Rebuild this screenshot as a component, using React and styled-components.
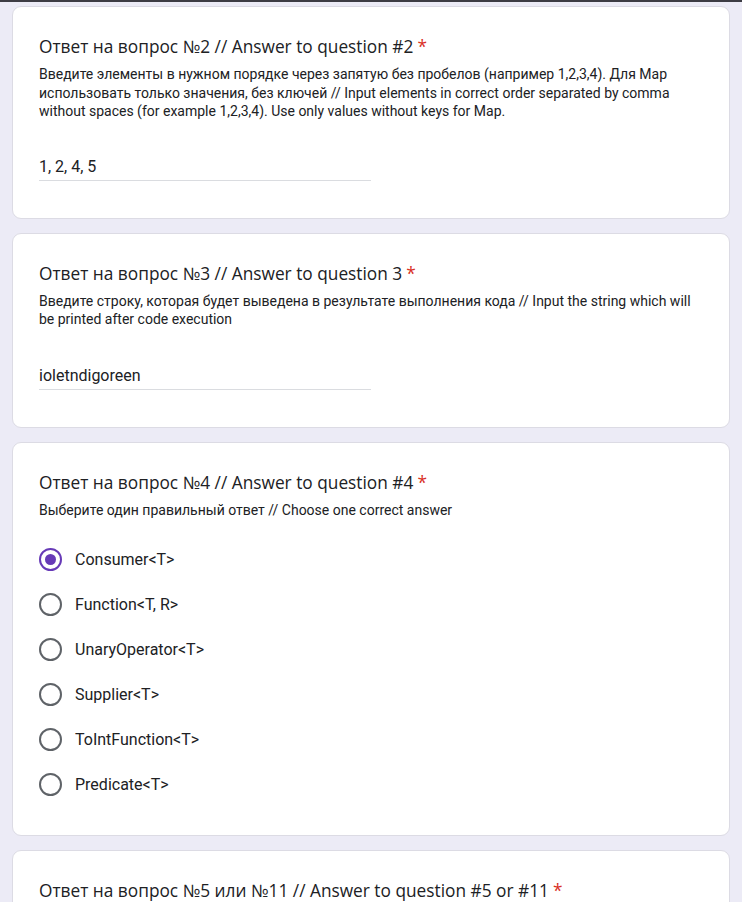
import styled, { createGlobalStyle } from "styled-components"

const GlobalStyle = createGlobalStyle`
  body {
    margin: 0;
    background: #ecebf6;
    font-family: Roboto, "Liberation Sans", sans-serif;
    color: #202124;
  }
`

const TopBar = styled.div`
  height: 2px;
  background: #3d3c44;
`

const Page = styled.div`
  display: flex;
  flex-direction: column;
  gap: 14px;
  padding: 4px 12px 0;
`

const Card = styled.div`
  background: #fff;
  border: 1px solid #dcdbe4;
  border-radius: 9px;
  padding: 28px 26px ${p => p.$bottom || 36}px;
`

const Title = styled.div`
  font-family: "Open Sans", Roboto, sans-serif;
  font-size: 17.3px;
  line-height: 24px;
  color: #202124;
`

const Star = styled.span`
  color: #d93025;
  margin-left: 4px;
`

const Desc = styled.div`
  font-size: 14px;
  line-height: 18.5px;
  margin-top: 6px;
  color: #202124;
`

const Answer = styled.div`
  width: 332px;
  margin-top: ${p => p.$top}px;
  font-size: 16px;
  line-height: 22px;
  padding-bottom: 2px;
  border-bottom: 1px solid #dadce0;
`

const Options = styled.div`
  display: flex;
  flex-direction: column;
  gap: 23px;
  margin-top: 29px;
`

const Option = styled.label`
  display: flex;
  align-items: center;
  gap: 13px;
  font-size: 16px;
  height: 22px;
  color: #202124;
`

const Radio = styled.span`
  box-sizing: border-box;
  width: 23px;
  height: 23px;
  border-radius: 50%;
  border: 2px solid ${p => (p.$checked ? "#673ab7" : "#5f6368")};
  display: flex;
  align-items: center;
  justify-content: center;
  &::after {
    content: "";
    display: ${p => (p.$checked ? "block" : "none")};
    width: 11px;
    height: 11px;
    border-radius: 50%;
    background: #673ab7;
  }
`

const options = [
  "Consumer<T>",
  "Function<T, R>",
  "UnaryOperator<T>",
  "Supplier<T>",
  "ToIntFunction<T>",
  "Predicate<T>",
]

function Question({ title, children }) {
  return (
    <>
      <Title>
        {title}
        <Star>*</Star>
      </Title>
      {children}
    </>
  )
}

export default function App() {
  return (
    <>
      <GlobalStyle />
      <TopBar />
      <Page>
        <Card $bottom={37}>
          <Question title="Ответ на вопрос №2 // Answer to question #2">
            <Desc>
              Введите элементы в нужном порядке через запятую без пробелов (например 1,2,3,4). Для Map
              использовать только значения, без ключей // Input elements in correct order separated by comma
              without spaces (for example 1,2,3,4). Use only values without keys for Map.
            </Desc>
            <Answer $top={35}>1, 2, 4, 5</Answer>
          </Question>
        </Card>
        <Card $bottom={37}>
          <Question title="Ответ на вопрос №3 // Answer to question 3">
            <Desc>
              Введите строку, которая будет выведена в результате выполнения кода // Input the string which will
              be printed after code execution
            </Desc>
            <Answer $top={36}>ioletndigoreen</Answer>
          </Question>
        </Card>
        <Card $bottom={40}>
          <Question title="Ответ на вопрос №4 // Answer to question #4">
            <Desc>Выберите один правильный ответ // Choose one correct answer</Desc>
            <Options>
              {options.map((o, i) => (
                <Option key={o}>
                  <Radio $checked={i === 0} />
                  {o}
                </Option>
              ))}
            </Options>
          </Question>
        </Card>
        <Card>
          <Question title="Ответ на вопрос №5 или №11 // Answer to question #5 or #11" />
        </Card>
      </Page>
    </>
  )
}
